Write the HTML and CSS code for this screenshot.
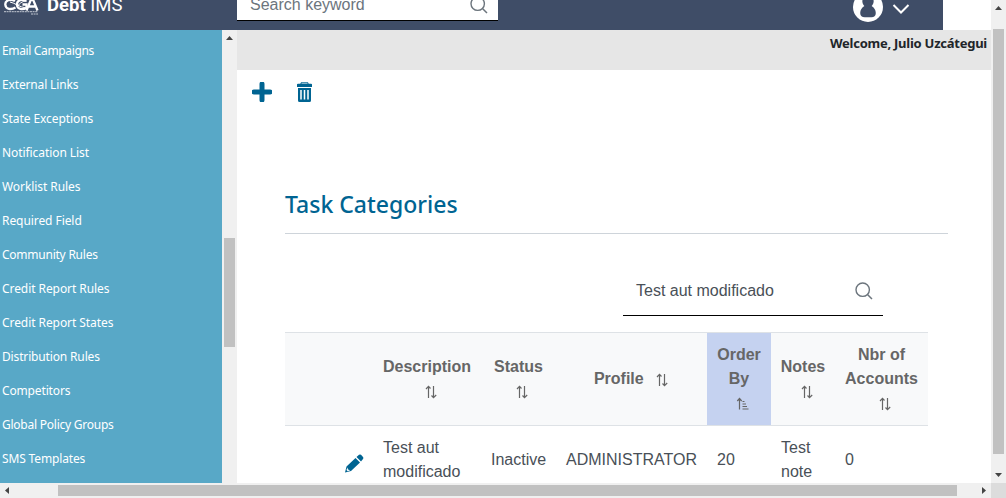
FILE: index.html
```
<!DOCTYPE html>
<html lang="en">
<head>
<meta charset="utf-8">
<title>Debt IMS</title>
<link rel="stylesheet" href="styles.css">
</head>
<body>
<svg class="defs" width="0" height="0">
  <symbol id="search" viewBox="0 0 18 18"><circle cx="7.700" cy="7.700" r="6.700" fill="none" stroke="#6c757d" stroke-width="1.400"/><path d="M12.500 12.500L17 17" stroke="#6c757d" stroke-width="1.500"/></symbol>
  <symbol id="sort" viewBox="0 0 14 14"><path d="M4.500 13V1.500M2 4l2.500-2.700L6.500 3.500M9.500 1v11.500M7.500 10.500l2 2.200 2.700-2.700" fill="none" stroke="currentColor" stroke-width="1.200"/></symbol>
  <symbol id="sort-up" viewBox="0 0 14 14"><path d="M3.500 12.500V2M1.300 4l2.200-2.500 2.200 2.500M6.500 4.500h2M6.500 7h3.500M6.500 9.500h4.500M6.500 12h6" fill="none" stroke="currentColor" stroke-width="1.200"/></symbol>
</svg>
<div class="window">
  <div class="page">
    <header class="topbar">
      <div class="brand">
        <svg class="logo" width="36" height="16" viewBox="0 0 36 16"><g fill="none" stroke="#fff" stroke-width="2.300"><path d="M11 1C6-2 1 1 1.300 4.500c.3 5 6 5.500 10.200 3"/><path d="M22 1c-5-3-9.500 0-9 4 .3 4.500 5.500 5 9.500 3V4.500h-4"/><path d="M22.500 10.500L28-3l5.500 13.500M25 6.500h7"/></g><path d="M6 2c5 1 9 5 16 6M13 7c3-5 7-6 10-6" stroke="#fff" fill="none"/><path d="M0 11.700h34M27 14h7" stroke="#c3c9d3" stroke-dasharray="2 .6"/></svg>
        <span class="product"><b>Debt</b> IMS</span>
      </div>
      <div class="search top-search"><span>Search keyword</span><svg width="18" height="18"><use href="#search"/></svg></div>
      <div class="user">
        <svg width="30" height="30" viewBox="0 0 30 30"><circle cx="15" cy="15" r="15" fill="#fff"/><path d="M15 4c-4 0-6 3-5.600 6 .2 1.700 1 3 2 4-2.500 1.500-4.200 4-4.200 7 0 3 2 4.300 4.500 4.300h6.800c2.500 0 4.300-1.300 4.300-4.300 0-3-1.700-5.500-4.200-7 1-1 1.800-2.300 2-4C21 7 19 4 15 4z" fill="#3f4d67"/></svg>
        <svg class="chevron" width="18" height="12" viewBox="0 0 18 12"><path d="M1.500 2L9 9.500 16.500 2" fill="none" stroke="#fff" stroke-width="2"/></svg>
      </div>
    </header>
    <div class="body">
      <nav class="sidebar">
        <a class="wide-3">Email Campaigns</a><a>External Links</a><a class="wide">State Exceptions</a><a class="wide">Notification List</a><a class="wide">Worklist Rules</a><a class="wide">Required Field</a><a class="tight">Community Rules</a><a class="wide">Credit Report Rules</a><a class="wide">Credit Report States</a><a>Distribution Rules</a><a>Competitors</a><a class="tight">Global Policy Groups</a><a>SMS Templates</a>
      </nav>
      <div class="vbar side-bar"><svg class="arrow" width="7" height="4"><path d="M0 4L3.500 0 7 4z"/></svg><div class="thumb"></div></div>
      <main class="content">
        <div class="welcome"><span>Welcome, Julio Uzcátegui</span></div>
        <div class="tools">
          <svg width="20" height="20" viewBox="0 0 20 20"><path d="M10 2v16M2 10h16" stroke="#006492" stroke-width="5" stroke-linecap="round"/></svg>
          <svg width="15" height="20" viewBox="0 0 15 20"><path d="M4 2V.8h7V2" fill="none" stroke="#006492"/><path d="M0 2.500q0-.8 1-.8h13q1 0 1 .8V5H0zM1 6h13v12.500q0 1.500-1.500 1.500h-10Q1 20 1 18.500z" fill="#006492"/><path d="M4 8v9.500M7.500 8v9.500M11 8v9.500" stroke="#fff" stroke-width="1.500"/></svg>
        </div>
        <h1><span>Task Categories</span></h1>
        <div class="search table-search"><span>Test aut modificado</span><svg width="18" height="18"><use href="#search"/></svg></div>
        <table>
          <colgroup><col class="c1"><col class="c2"><col class="c3"><col class="c4"><col class="c5"><col class="c6"><col class="c7"></colgroup>
          <thead><tr>
            <th></th>
            <th>Description<br><svg class="sort"><use href="#sort"/></svg></th>
            <th>Status<br><svg class="sort"><use href="#sort"/></svg></th>
            <th>Profile <svg class="sort inline"><use href="#sort"/></svg></th>
            <th class="active">Order By<br><svg class="sort"><use href="#sort-up"/></svg></th>
            <th>Notes<br><svg class="sort"><use href="#sort"/></svg></th>
            <th>Nbr of Accounts<br><svg class="sort"><use href="#sort"/></svg></th>
          </tr></thead>
          <tbody><tr>
            <td class="edit"><svg width="19" height="19" viewBox="0 0 19 19"><path d="M0 18.500L1.500 12.500 10.500 4 15 8.500 6 17zM11.500 3L14 .8q1-.8 2 0L18 3q.9 1 0 2L16 7.500z" fill="#006492"/><path d="M2.300 13.500l.7 2 2.200.7-2.500 1-1.200-1.200z" fill="#fff"/></svg></td>
            <td>Test aut modificado</td><td>Inactive</td><td>ADMINISTRATOR</td><td>20</td><td>Test note</td><td>0</td>
          </tr></tbody>
        </table>
      </main>
    </div>
  </div>
  <div class="vbar page-bar"><svg class="arrow" width="7" height="4"><path d="M0 4L3.500 0 7 4z"/></svg><div class="thumb"></div><svg class="arrow" width="7" height="4"><path d="M0 0L3.500 4 7 0z"/></svg></div>
  <div class="hbar"><svg class="arrow" width="4" height="7"><path d="M4 0L0 3.500 4 7z"/></svg><div class="thumb"></div><svg class="arrow" width="4" height="7"><path d="M0 0l4 3.500L0 7z"/></svg></div>
  <div class="corner"></div>
</div>
</body>
</html>
```
FILE: styles.css
```
* { box-sizing: border-box; }
body { margin: 0; overflow: hidden; background: #fff; color: #495057; font: 16px/24px "Liberation Sans", Arial, sans-serif; }
svg { display: block; flex: none; }
.defs { display: none; }
.window { display: grid; grid-template: 483px 15px / 991px 15px; width: 1006px; height: 498px; }
.page { overflow: hidden; }
.topbar { display: flex; width: 943px; height: 30px; background: #3f4d67; overflow: hidden; }
.brand { display: flex; width: 237px; padding-left: 4px; color: #fff; }
.product { margin: -7px 0 0 7px; font: 18.5px/24px Roboto, sans-serif; }
.search { display: flex; align-items: center; justify-content: space-between; border-bottom: 1px solid #000; padding: 0 10px 0 13px; }
.top-search { width: 261px; height: 50px; margin-top: -29px; padding-top: 18px; background: #fff; color: #6c757d; }
.user { display: flex; width: 90px; margin-left: auto; margin-top: -8px; }
.chevron { margin: 11px 0 0 9px; }
.body { display: flex; height: 453px; }
.sidebar { display: flex; flex-direction: column; width: 222px; padding: 4px 2px 0; background: #58a8c7; color: #fff; font: 12px/34px "Noto Sans", sans-serif; }
.sidebar a { height: 34px; letter-spacing: -.15px; }
.sidebar .wide { letter-spacing: -.07px; }
.sidebar .wide-3 { letter-spacing: -.35px; }
.sidebar .tight { letter-spacing: -.24px; }
.vbar { display: flex; flex-direction: column; align-items: center; width: 15px; background: #f0f0f0; }
.arrow { fill: #444; }
.thumb { background: #c1c1c1; }
.side-bar { padding-top: 6px; }
.side-bar .thumb { width: 11px; height: 109px; margin-top: 198px; }
.page-bar { padding-top: 6px; }
.page-bar .thumb { width: 11px; height: 425px; margin: 19px 0; }
.hbar { display: flex; align-items: center; padding-left: 5px; background: #f0f0f0; }
.hbar .thumb { width: 899px; height: 11px; margin: 0 25px 0 49px; }
.corner { background: #dcdcdc; }
.content { width: 754px; }
.welcome { height: 40px; padding: 2px 4px 0; background: #e6e6e6; color: #212529; text-align: right; font: bold 13px/23px "Noto Sans", sans-serif; letter-spacing: -.25px; }
.tools { display: flex; gap: 25px; padding: 12px 15px 0; height: 111px; }
h1 { width: 663px; height: 53px; margin: 0 0 0 48px; border-bottom: 1px solid #ced4da; color: #006492; font: 500 23px/47px "Noto Sans", sans-serif; }
.table-search { width: 260px; height: 50px; margin: 32px 0 16px 386px; }
table { width: 643px; margin-left: 48px; table-layout: fixed; border-collapse: separate; border-spacing: 0; }
.c1 { width: 88px; } .c2 { width: 108px; } .c3 { width: 75px; } .c4 { width: 151px; } .c5 { width: 64px; } .c6 { width: 64px; } .c7 { width: 93px; }
th { height: 94px; padding: 0; border: solid #dee2e6; border-width: 1px 0; background: #f8f9fa; color: #666; font-weight: bold; }
.active { padding: 0 8px; background: #c5d2f0; }
td { height: 68px; padding: 10px; }
.edit svg { margin: 7px 0 0 50px; }
.sort { display: inline-block; width: 14px; height: 14px; margin-left: 7px; vertical-align: -3px; }
```
